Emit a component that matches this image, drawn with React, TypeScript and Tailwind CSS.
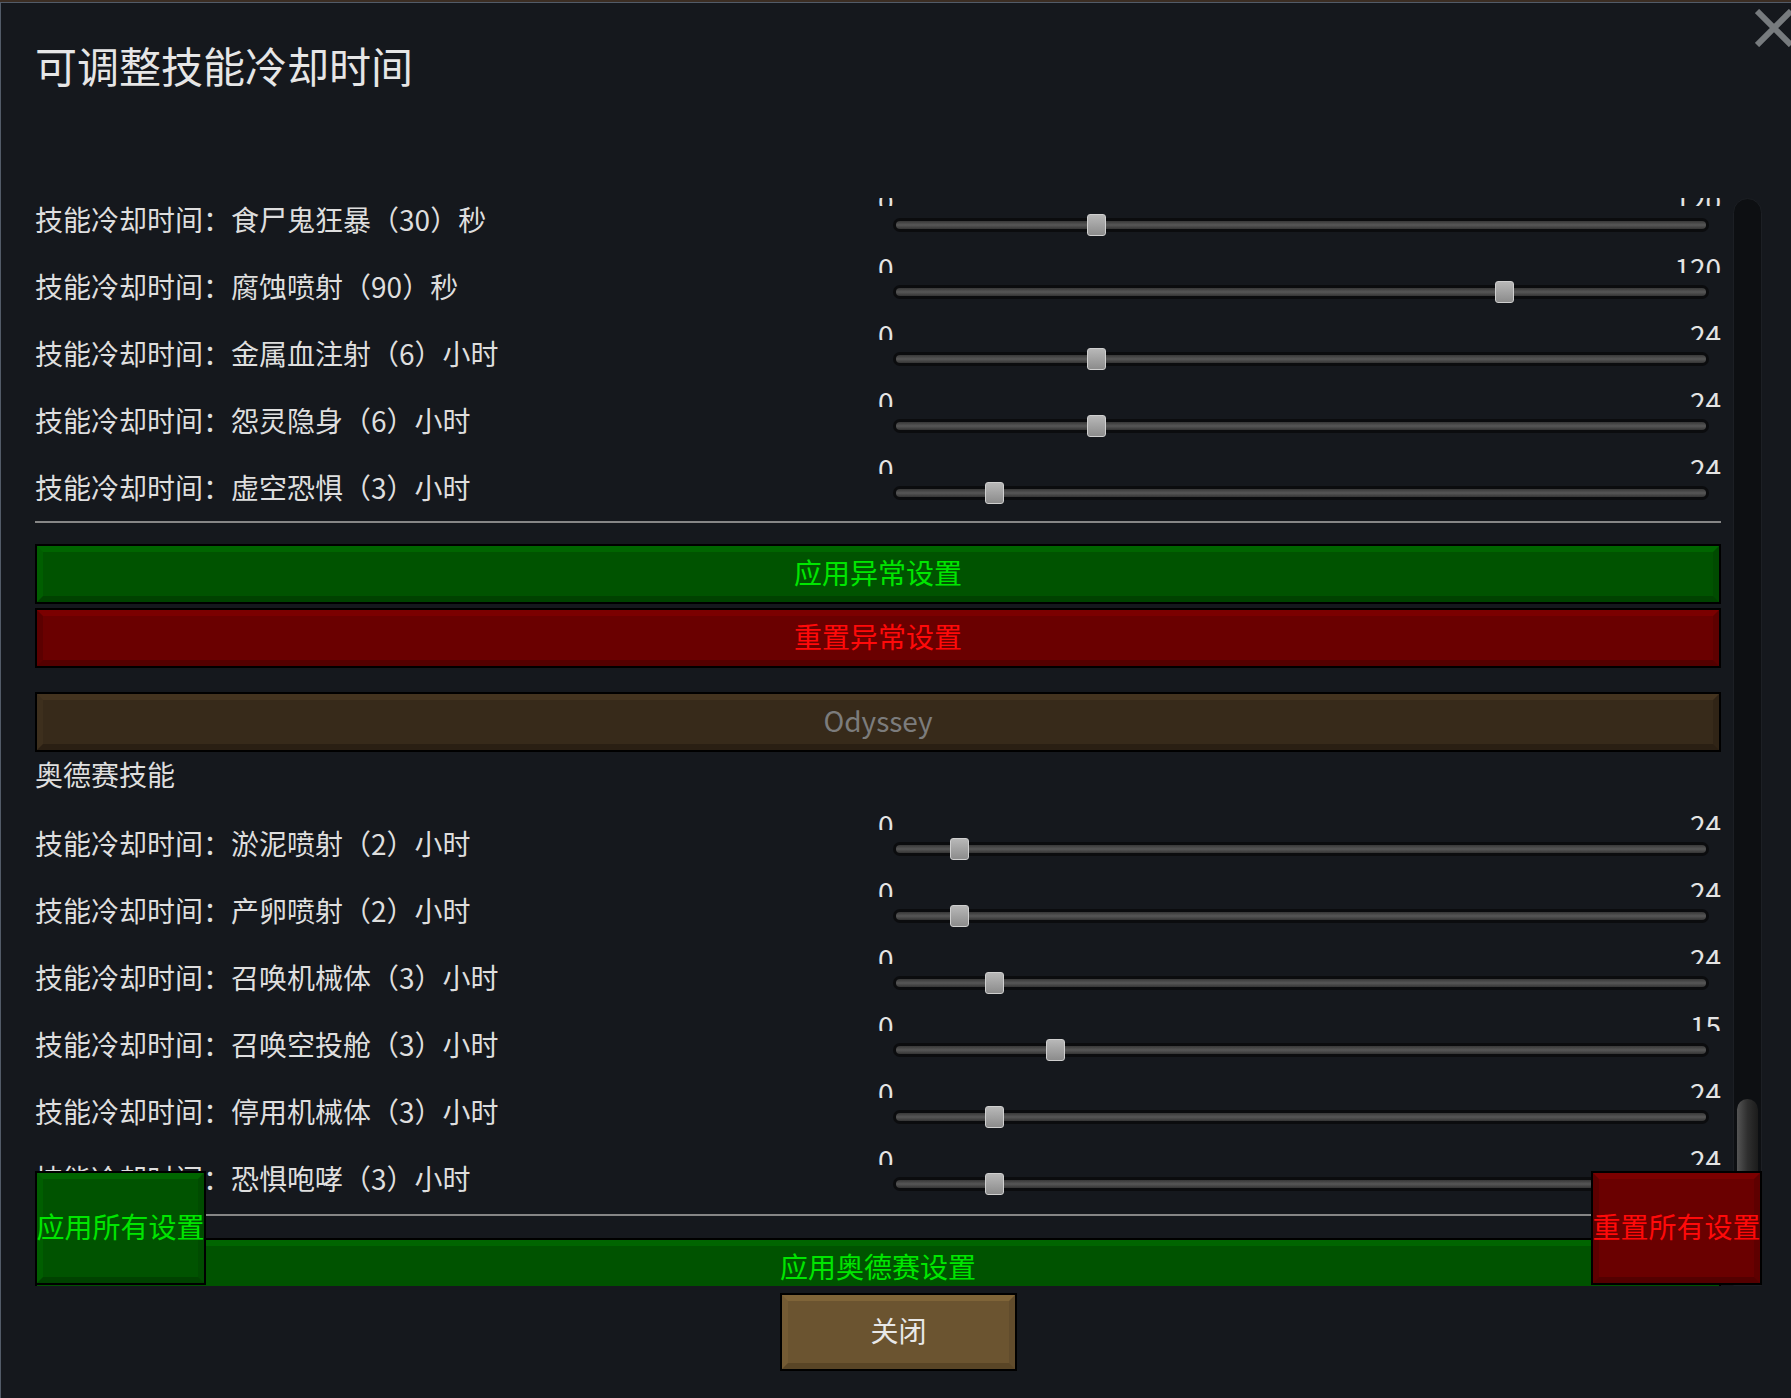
import React from 'react';

type Skill = { name: string; value: number; max: number; unit: string };

const vanilla: Skill[] = [
  { name: '食尸鬼狂暴', value: 30, max: 120, unit: '秒' },
  { name: '腐蚀喷射', value: 90, max: 120, unit: '秒' },
  { name: '金属血注射', value: 6, max: 24, unit: '小时' },
  { name: '怨灵隐身', value: 6, max: 24, unit: '小时' },
  { name: '虚空恐惧', value: 3, max: 24, unit: '小时' },
];

const odyssey: Skill[] = [
  { name: '淤泥喷射', value: 2, max: 24, unit: '小时' },
  { name: '产卵喷射', value: 2, max: 24, unit: '小时' },
  { name: '召唤机械体', value: 3, max: 24, unit: '小时' },
  { name: '召唤空投舱', value: 3, max: 15, unit: '小时' },
  { name: '停用机械体', value: 3, max: 24, unit: '小时' },
  { name: '恐惧咆哮', value: 3, max: 24, unit: '小时' },
];

const SkillRow = ({ skill }: { skill: Skill }) => {
  const pct = (skill.value / skill.max) * 100;
  return (
    <div className="flex h-[67px]">
      <div className="w-[843px] shrink-0 pt-[26px] text-[28px] leading-none text-[#dedede] whitespace-nowrap">
        技能冷却时间：{skill.name}（{skill.value}）{skill.unit}
      </div>
      <div className="w-[843px] shrink-0">
        <div className="mt-[7px] h-[20px] overflow-hidden flex justify-between text-[28px] leading-none text-[#e4e4e4]">
          <span>0</span>
          <span>{skill.max}</span>
        </div>
        <div className="relative mt-[12px] ml-[15px] mr-[12px] h-[14px] rounded-full bg-[#0b0c0e] p-[3px]">
          <div className="h-full rounded-full bg-gradient-to-b from-[#383838] via-[#575757] to-[#353535]" />
          <div
            className="absolute top-[-4px] w-[19px] h-[22px] rounded-[3px] border border-[#cfcfcf] bg-gradient-to-b from-[#b8b8b8] to-[#8c8c8c]"
            style={{ left: `calc(${pct}% - 10.5px)` }}
          />
        </div>
      </div>
    </div>
  );
};

const Divider = ({ className }: { className: string }) => (
  <div className={`h-[2px] bg-[#868686] ${className}`} />
);

export default function App() {
  return (
    <div className="relative w-[1791px] h-[1398px] overflow-hidden bg-[#3b2d23] font-['Noto_Sans_CJK_SC',sans-serif]">
      <div className="mt-[2px] h-[1396px] flex flex-col bg-[#15181d] border-t border-l border-[#525b68] pl-[34px] pr-[29px]">
        <h1 className="mt-[41px] text-[42px] leading-none text-[#e6e6e6] font-normal">可调整技能冷却时间</h1>

        <div className="mt-[112px] h-[1088px] flex gap-[12px]">
          <div className="w-[1686px] overflow-hidden">
            <div className="-mt-[19px]">
              {vanilla.map(s => (
                <SkillRow key={s.name} skill={s} />
              ))}
              <Divider className="mt-[7px]" />

              <div className="mt-[21px] h-[60px] border-2 border-black">
                <div className="h-full flex items-center justify-center pb-[5px] border-[6px] bg-[#005300] border-t-[#006500] border-l-[#005e00] border-r-[#004b00] border-b-[#004200] text-[28px] leading-none text-[#00e600]">
                  应用异常设置
                </div>
              </div>
              <div className="mt-[4px] h-[60px] border-2 border-black">
                <div className="h-full flex items-center justify-center pb-[5px] border-[6px] bg-[#6a0000] border-t-[#7b0000] border-l-[#5c0000] border-r-[#5e0000] border-b-[#540000] text-[28px] leading-none text-[#ff0a0a]">
                  重置异常设置
                </div>
              </div>

              <div className="mt-[24px] h-[60px] border-2 border-black">
                <div className="h-full flex items-center justify-center pb-[5px] border-[6px] bg-[#372a1a] border-t-[#43331f] border-l-[#3d2f1d] border-r-[#302416] border-b-[#2a1f13] text-[28px] leading-none text-[#7c7c7c]">
                  Odyssey
                </div>
              </div>
              <div className="mt-[8px] h-[28px] text-[28px] leading-none text-[#dedede]">奥德赛技能</div>

              <div className="mt-[15px]">
                {odyssey.map(s => (
                  <SkillRow key={s.name} skill={s} />
                ))}
              </div>
              <Divider className="mt-[9px]" />

              <div className="mt-[22px] h-[60px] border-2 border-black">
                <div className="h-full flex items-center justify-center pb-[5px] border-[6px] bg-[#005300] border-t-[#006500] border-l-[#005300] border-r-[#005300] border-b-[#004200] text-[28px] leading-none text-[#00e600]">
                  应用奥德赛设置
                </div>
              </div>
            </div>
          </div>

          <div className="w-[29px] h-full flex flex-col rounded-t-full bg-[#0d0f12] border border-[#1c1f24]">
            <div className="mt-auto mx-[3px] h-[186px] rounded-t-full bg-gradient-to-r from-[#555555] via-[#2f2f2f] to-[#1c1c1c]" />
          </div>
        </div>

        <div className="mt-[7px] flex justify-center">
          <div className="w-[237px] h-[78px] border-2 border-black">
            <div className="h-full flex items-center justify-center pb-[4px] border-[6px] bg-[#6b5430] border-t-[#7f6438] border-l-[#745b34] border-r-[#614c2c] border-b-[#594526] text-[28px] leading-none text-[#e8e8e8]">
              关闭
            </div>
          </div>
        </div>
      </div>

      <svg className="absolute left-[1755px] top-[9px]" width="38" height="38" viewBox="0 0 38 38">
        <path d="M2 2 L36 36 M36 2 L2 36" stroke="#777b7e" strokeWidth="6" />
      </svg>

      <div className="absolute left-[35px] top-[1171px] w-[171px] h-[114px] border-2 border-black">
        <div className="h-full flex items-center justify-center pb-[5px] border-[6px] bg-[#005300] border-t-[#006500] border-l-[#005e00] border-r-[#004b00] border-b-[#004200] text-[28px] leading-none text-[#00e600] whitespace-nowrap">
          应用所有设置
        </div>
      </div>
      <div className="absolute left-[1591px] top-[1171px] w-[171px] h-[114px] border-2 border-black">
        <div className="h-full flex items-center justify-center pb-[5px] border-[6px] bg-[#6a0000] border-t-[#7b0000] border-l-[#5c0000] border-r-[#5e0000] border-b-[#540000] text-[28px] leading-none text-[#ff0a0a] whitespace-nowrap">
          重置所有设置
        </div>
      </div>
    </div>
  );
}
